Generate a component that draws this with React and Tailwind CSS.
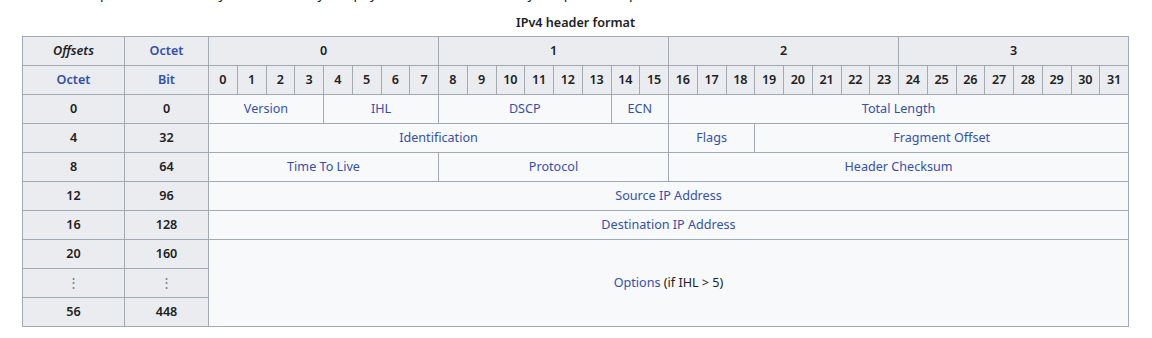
const link = 'text-[#3450ac]';
const cell = 'border border-[#a2a9b1] text-center p-0';
const th = cell + ' bg-[#eaecf0] font-semibold';
const thDark = th + ' text-[#202122]';
const thLink = th + ' ' + link;
const td = cell + ' bg-[#f8f9fa] ' + link;

const bits = Array.from({ length: 32 }, (_, i) => i);

const rows = [
  {
    octet: '0',
    bit: '0',
    fields: [
      ['Version', 4],
      ['IHL', 4],
      ['DSCP', 6],
      ['ECN', 2],
      ['Total Length', 16],
    ],
  },
  {
    octet: '4',
    bit: '32',
    fields: [
      ['Identification', 16],
      ['Flags', 3],
      ['Fragment Offset', 13],
    ],
  },
  {
    octet: '8',
    bit: '64',
    fields: [
      ['Time To Live', 8],
      ['Protocol', 8],
      ['Header Checksum', 16],
    ],
  },
  { octet: '12', bit: '96', fields: [['Source IP Address', 32]] },
  { octet: '16', bit: '128', fields: [['Destination IP Address', 32]] },
];

const App = () => {
  return (
    <div className="bg-white w-[1152px] h-[338px] overflow-hidden font-['Noto_Sans','Liberation_Sans',sans-serif] text-[12.6px] text-[#202122]">
      <div className="h-[3px] overflow-hidden pl-[40px]">
        <p className="mt-[-17px] leading-[20px] text-[14px]">
          The IPv4 packet header may be followed by the payload, which is carried by the protocol specified in the header.
        </p>
      </div>
      <div className="pl-[22px] pt-[7px]">
        <table className="table-fixed border-collapse w-[1107px]">
          <caption className="font-semibold leading-[26px] text-[12.6px] text-[#202122]">IPv4 header format</caption>
          <colgroup>
            <col className="w-[102px]" />
            <col className="w-[84px]" />
            {bits.map(b => (
              <col key={b} />
            ))}
          </colgroup>
          <tbody>
            <tr className="h-[29px]">
              <th className={thDark + ' italic'}>Offsets</th>
              <th className={thLink}>Octet</th>
              {[0, 1, 2, 3].map(o => (
                <th key={o} colSpan={8} className={thDark}>{o}</th>
              ))}
            </tr>
            <tr className="h-[29px]">
              <th className={thLink}>Octet</th>
              <th className={thLink}>Bit</th>
              {bits.map(b => (
                <th key={b} className={thDark}>{b}</th>
              ))}
            </tr>
            {rows.map(r => (
              <tr key={r.octet} className="h-[29px]">
                <th className={thDark}>{r.octet}</th>
                <th className={thDark}>{r.bit}</th>
                {r.fields.map(([name, span]) => (
                  <td key={name} colSpan={span} className={td}>{name}</td>
                ))}
              </tr>
            ))}
            <tr className="h-[29px]">
              <th className={thDark}>20</th>
              <th className={thDark}>160</th>
              <td colSpan={32} rowSpan={3} className={td}>
                Options <span className="text-[#202122]">(if IHL &gt; 5)</span>
              </td>
            </tr>
            <tr className="h-[29px]">
              <th className={cell + ' bg-[#eaecf0] font-normal text-[#72777d]'}>⋮</th>
              <th className={cell + ' bg-[#eaecf0] font-normal text-[#72777d]'}>⋮</th>
            </tr>
            <tr className="h-[29px]">
              <th className={thDark}>56</th>
              <th className={thDark}>448</th>
            </tr>
          </tbody>
        </table>
      </div>
    </div>
  );
};

export default App;
